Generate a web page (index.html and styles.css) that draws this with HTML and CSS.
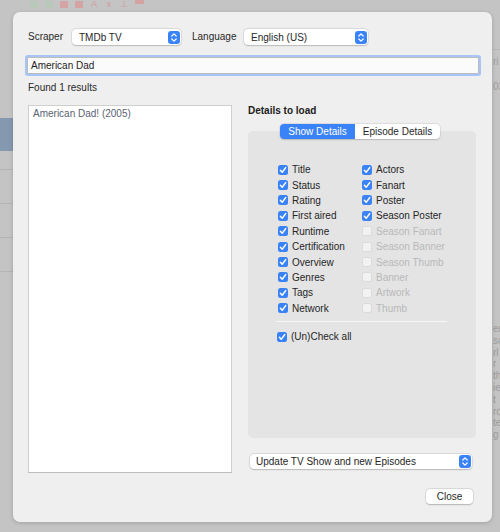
FILE: index.html
```html
<!DOCTYPE html>
<html>
<head>
<meta charset="utf-8">
<link rel="stylesheet" href="styles.css">
</head>
<body>
<div class="backdrop">
  <div class="bg-toolbar">
    <span class="ti g"></span><span class="ti g"></span><span class="ti r"></span><span class="ti r"></span><span class="ti r t">A</span><span class="ti r t">x</span><span class="ti r t">⊥</span><span class="ti r bar"></span>
  </div>
  <div class="bg-left">
    <div class="bg-sel"></div>
    <div class="bg-row first"></div>
    <div class="bg-row"></div>
    <div class="bg-row"></div>
    <div class="bg-row"></div>
  </div>
  <div class="bg-right">
    <div class="bg-line"></div>
    <div class="frag f1">ri</div>
    <div class="frag f2">03</div>
    <div class="frag-col">
      <div>er</div><div>sc</div><div>rl</div><div>r</div><div>th</div><div>ie</div><div>t</div><div>rd</div><div>te</div><div>g</div>
    </div>
  </div>
</div>

<div class="dialog">
  <div class="toprow">
    <span class="lbl lbl-scraper">Scraper</span>
    <div class="popup popup-scraper"><span>TMDb TV</span>
      <svg class="stepper" viewBox="0 0 12 13"><rect x="0" y="0" width="12" height="13" rx="3" fill="#3a82f7"/><path d="M3.8 5 L6 2.9 L8.2 5 M3.8 8 L6 10.1 L8.2 8" fill="none" stroke="#fff" stroke-width="1.2" stroke-linecap="round" stroke-linejoin="round"/></svg>
    </div>
    <span class="lbl lbl-lang">Language</span>
    <div class="popup popup-lang"><span>English (US)</span>
      <svg class="stepper" viewBox="0 0 12 13"><rect x="0" y="0" width="12" height="13" rx="3" fill="#3a82f7"/><path d="M3.8 5 L6 2.9 L8.2 5 M3.8 8 L6 10.1 L8.2 8" fill="none" stroke="#fff" stroke-width="1.2" stroke-linecap="round" stroke-linejoin="round"/></svg>
    </div>
  </div>
  <div class="search">American Dad</div>
  <div class="found">Found 1 results</div>

  <div class="main">
    <div class="results">
      <div class="result">American Dad! (2005)</div>
    </div>
    <div class="right">
      <div class="details-title">Details to load</div>
      <div class="tabs">
        <span class="tab active">Show Details</span><span class="tab">Episode Details</span>
      </div>
      <div class="group">
        <div class="cols">
          <div class="col col1">
            <div class="cb"><i class="box on"></i>Title</div>
            <div class="cb"><i class="box on"></i>Status</div>
            <div class="cb"><i class="box on"></i>Rating</div>
            <div class="cb"><i class="box on"></i>First aired</div>
            <div class="cb"><i class="box on"></i>Runtime</div>
            <div class="cb"><i class="box on"></i>Certification</div>
            <div class="cb"><i class="box on"></i>Overview</div>
            <div class="cb"><i class="box on"></i>Genres</div>
            <div class="cb"><i class="box on"></i>Tags</div>
            <div class="cb"><i class="box on"></i>Network</div>
          </div>
          <div class="col col2">
            <div class="cb"><i class="box on"></i>Actors</div>
            <div class="cb"><i class="box on"></i>Fanart</div>
            <div class="cb"><i class="box on"></i>Poster</div>
            <div class="cb"><i class="box on"></i>Season Poster</div>
            <div class="cb dis"><i class="box"></i>Season Fanart</div>
            <div class="cb dis"><i class="box"></i>Season Banner</div>
            <div class="cb dis"><i class="box"></i>Season Thumb</div>
            <div class="cb dis"><i class="box"></i>Banner</div>
            <div class="cb dis"><i class="box"></i>Artwork</div>
            <div class="cb dis"><i class="box"></i>Thumb</div>
          </div>
        </div>
        <div class="sep"></div>
        <div class="cb checkall"><i class="box on"></i>(Un)Check all</div>
      </div>
      <div class="popup popup-update"><span>Update TV Show and new Episodes</span>
        <svg class="stepper" viewBox="0 0 12 13"><rect x="0" y="0" width="12" height="13" rx="3" fill="#3a82f7"/><path d="M3.8 5 L6 2.9 L8.2 5 M3.8 8 L6 10.1 L8.2 8" fill="none" stroke="#fff" stroke-width="1.2" stroke-linecap="round" stroke-linejoin="round"/></svg>
      </div>
    </div>
  </div>
  <div class="footer">
    <button class="btn">Close</button>
  </div>
</div>
</body>
</html>
```
FILE: styles.css
```css
html, body {
  margin: 0;
  padding: 0;
}
body {
  width: 500px;
  height: 532px;
  background: #c4c4c4;
  font-family: "Liberation Sans", Arial, sans-serif;
  font-size: 10px;
  color: #262626;
  position: relative;
  overflow: hidden;
}

/* dimmed window behind the sheet */
.backdrop {
  width: 500px;
  height: 532px;
  position: relative;
}
.bg-toolbar {
  display: flex;
  gap: 7px;
  padding-left: 30px;
  height: 8px;
  align-items: flex-end;
}
.ti {
  display: block;
  width: 8px;
  height: 7px;
}
.ti.g { background: #b9c9b9; }
.ti.r { background: #d4a3a3; }
.ti.t {
  background: none;
  color: #d09c9c;
  font-size: 9px;
  line-height: 7px;
  text-align: center;
}
.ti.bar { height: 4px; align-self: flex-start; width: 9px; }
.bg-left {
  position: absolute;
  left: 0;
  top: 118px;
  width: 13px;
}
.bg-sel {
  height: 33px;
  background: #8499b0;
}
.bg-row {
  height: 33px;
  border-bottom: 1px solid #b4b4b4;
}
.bg-row.first { height: 18px; }
.bg-right {
  position: absolute;
  left: 493px;
  top: 0;
  width: 7px;
  height: 532px;
  overflow: hidden;
  color: #9c9c9c;
  font-size: 10px;
}
.bg-line {
  position: absolute;
  top: 49px;
  left: 0;
  width: 7px;
  height: 1px;
  background: #b8b8b8;
}
.frag {
  position: absolute;
  left: 0;
  line-height: 12px;
}
.f1 { top: 56px; }
.f2 { top: 81px; }
.frag-col {
  position: absolute;
  left: 0;
  top: 323px;
  line-height: 11.8px;
}

/* sheet dialog */
.dialog {
  position: absolute;
  left: 13px;
  top: 12px;
  width: 479px;
  height: 510px;
  box-sizing: border-box;
  background: #efefef;
  border-radius: 7px;
  box-shadow: 0 1px 4px rgba(0,0,0,0.18);
  padding: 17px 0 0 14px;
}
.toprow {
  display: flex;
  align-items: center;
  height: 16px;
}
.lbl {
  color: #2a2a2a;
  line-height: 16px;
}
.lbl-scraper { margin-left: 1px; width: 44px; }
.lbl-lang { margin-left: 11px; width: 52px; }
.popup {
  position: relative;
  box-sizing: border-box;
  display: flex;
  align-items: center;
  height: 16px;
  background: #ffffff;
  border-radius: 4px;
  box-shadow: 0 0 0 0.5px rgba(0,0,0,0.12), 0 0.5px 1.5px rgba(0,0,0,0.18);
  padding-left: 7px;
  color: #262626;
}
.stepper {
  position: absolute;
  right: 1.5px;
  top: 1.5px;
  width: 12px;
  height: 13px;
}
.popup-scraper { width: 109px; }
.popup-lang { width: 124px; }
.search {
  margin-top: 12px;
  width: 452px;
  height: 17px;
  box-sizing: border-box;
  background: #fbfbfb;
  border: 1px solid #bcbcbc;
  box-shadow: 0 0 0 2px #a7c5f8;
  border-radius: 1px;
  padding-left: 3px;
  line-height: 15px;
  color: #1e1e1e;
}
.found {
  margin-top: 8px;
  margin-left: 1px;
  line-height: 12px;
  color: #2a2a2a;
}
.main {
  display: flex;
  margin-top: 11px;
  margin-left: 1px;
}
.results {
  width: 204px;
  height: 368px;
  box-sizing: border-box;
  background: #ffffff;
  border: 1px solid #cfcfcf;
  border-bottom-color: #bdbdbd;
  padding: 2px 0 0 4px;
}
.result {
  line-height: 12px;
  color: #5a6272;
}
.right {
  margin-left: 16px;
  width: 228px;
  display: flex;
  flex-direction: column;
}
.details-title {
  font-weight: bold;
  line-height: 12px;
  color: #1c1c1c;
}
.tabs {
  margin-top: 7px;
  margin-left: 32px;
  display: flex;
  height: 15px;
  width: 160px;
  background: #ffffff;
  border-radius: 4px;
  box-shadow: 0 0 0 0.5px rgba(0,0,0,0.1), 0 0.5px 1.5px rgba(0,0,0,0.15);
  position: relative;
  z-index: 1;
  overflow: hidden;
}
.tab {
  display: block;
  line-height: 15px;
  text-align: center;
  color: #262626;
}
.tab.active {
  width: 75px;
  background: #3a82f7;
  color: #ffffff;
}
.tab:not(.active) { width: 85px; }
.group {
  margin-top: -8px;
  height: 307px;
  box-sizing: border-box;
  background: #e4e4e4;
  border-radius: 5px;
  padding: 31px 0 0 30px;
}
.cols {
  display: flex;
}
.col1 { width: 84px; }
.cb {
  display: flex;
  align-items: center;
  height: 15.4px;
  white-space: nowrap;
  color: #262626;
}
.cb.dis { color: #b9b9b9; }
.box {
  display: block;
  width: 10px;
  height: 10px;
  box-sizing: border-box;
  border-radius: 2.5px;
  margin-right: 4px;
  flex: none;
  background: #f2f2f2;
  border: 0.5px solid #dadada;
}
.box.on {
  border: none;
  background: #3a82f7 url("data:image/svg+xml;utf8,<svg xmlns='http://www.w3.org/2000/svg' viewBox='0 0 10 10'><path d='M2.4 5.3 L4.2 7.2 L7.7 2.6' fill='none' stroke='white' stroke-width='1.5' stroke-linecap='round' stroke-linejoin='round'/></svg>") center/10px 10px no-repeat;
}
.sep {
  margin-top: 5px;
  margin-left: -2px;
  width: 171px;
  height: 1px;
  background: #f7f7f7;
}
.checkall {
  margin-top: 7px;
  margin-left: -1px;
}
.popup-update {
  margin-top: 16px;
  margin-left: 2px;
  width: 222px;
  height: 15px;
  padding-left: 6px;
}
.popup-update .stepper { top: 1px; }
.footer {
  display: flex;
  justify-content: flex-end;
  margin-top: 16px;
  padding-right: 19px;
}
.btn {
  font-family: "Liberation Sans", Arial, sans-serif;
  font-size: 10px;
  color: #262626;
  width: 47px;
  height: 15px;
  padding: 0;
  border: none;
  background: #ffffff;
  border-radius: 4px;
  box-shadow: 0 0 0 0.5px rgba(0,0,0,0.12), 0 0.5px 1.5px rgba(0,0,0,0.2);
  line-height: 15px;
}
```
